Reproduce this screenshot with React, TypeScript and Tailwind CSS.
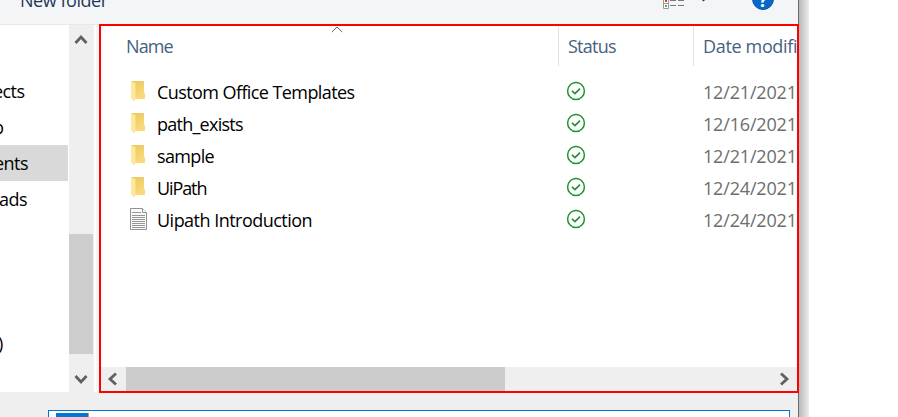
import React from "react";

const files = [
  { name: "Custom Office Templates", date: "12/21/2021", folder: true, spacing: "tracking-[-0.58px]" },
  { name: "path_exists", date: "12/16/2021", folder: true, spacing: "tracking-[-0.75px]" },
  { name: "sample", date: "12/21/2021", folder: true, spacing: "tracking-[-0.65px]" },
  { name: "UiPath", date: "12/24/2021", folder: true, spacing: "tracking-[-1.1px]" },
  { name: "Uipath Introduction", date: "12/24/2021", folder: false, spacing: "tracking-[-0.52px]" },
];

function FolderIcon() {
  return (
    <svg width="20" height="24" viewBox="0 0 20 24" className="shrink-0">
      <defs>
        <linearGradient id="back" x1="0" x2="0.6" y1="0" y2="1">
          <stop offset="0" stopColor="#e9c75f" />
          <stop offset="1" stopColor="#fadb7c" />
        </linearGradient>
        <linearGradient id="flap" x1="0" x2="1" y1="0" y2="0">
          <stop offset="0" stopColor="#ffe9a2" />
          <stop offset="1" stopColor="#fde59b" />
        </linearGradient>
      </defs>
      <path d="M2 2h13v11.5l1 .8V20H5z" fill="url(#back)" />
      <path d="M2 2l4.5 2.2V20l-.8 2.6L2 20z" fill="url(#flap)" />
    </svg>
  );
}

function DocumentIcon() {
  return (
    <svg width="20" height="24" viewBox="0 0 20 24" className="shrink-0">
      <path d="M1.5 1.5h12l4 4v17h-16z" fill="#fafafa" stroke="#929292" />
      <path d="M13.5 1.5v4h4" fill="#fff" stroke="#929292" />
      <path d="M3 5.5h9M3 8.5h13M3 10.5h13M3 12.5h13M3 14.5h13M3 16.5h13M3 18.5h13M3 20.5h13" stroke="#969696" />
    </svg>
  );
}

function SyncedIcon() {
  return (
    <svg width="20" height="20" viewBox="0 0 20 20" fill="none" stroke="#1d9134">
      <circle cx="10" cy="10" r="8.4" strokeWidth="1.5" />
      <path d="M6 9.8l3 2.8 5-5" strokeWidth="1.7" />
    </svg>
  );
}

function Arrow({ d, w, h }: { d: string; w: number; h: number }) {
  return (
    <svg width={w} height={h} viewBox={`0 0 ${w} ${h}`} fill="none" stroke="#606060" strokeWidth="2.8">
      <path d={d} />
    </svg>
  );
}

export default function App() {
  return (
    <div className="flex h-[417px] w-[898px] overflow-hidden bg-white font-['Open_Sans','Noto_Sans',sans-serif] text-[18px]">
      <div className="relative flex w-[799px] shrink-0 flex-col border-r border-[#6b6b6b] bg-[#efefef]">
        <header className="flex h-[25px] shrink-0 items-start overflow-hidden border-b border-[#e6e8ec] bg-[#f4f5f7]">
          <span className="-mt-[12px] ml-5 w-[642px] whitespace-nowrap leading-6 tracking-[-0.45px] text-[#1e395b]">New folder</span>
          <svg width="50" height="12" viewBox="0 0 50 12" className="ml-[1px] shrink-0">
            <path d="M.5-1v9.5h5V-1M.5 3.5h5" fill="#fff" stroke="#999" />
            <path d="M2 0h2v2H2z" fill="#d43a1c" />
            <path d="M2 5h2v2H2z" fill="#65a85b" />
            <path d="M7 .5h6M15 .5h6M7 5.5h6M15 5.5h6" stroke="#77777d" />
            <path d="M39 0h3l-1.5 1.5z" fill="#1e395b" />
          </svg>
          <span className="-mt-3 ml-[39px] flex h-[22px] w-[22px] shrink-0 items-center justify-center rounded-full border border-[#0755a4] bg-[#0568c9] pt-[3px] text-[18px] font-bold text-white">?</span>
        </header>

        <main className="flex h-[367px] shrink-0 bg-white">
          <nav className="flex w-[69px] shrink-0 flex-col overflow-hidden pt-12 tracking-[-0.55px]">
            <div className="flex h-9 items-center"><span className="-ml-[11px]">jects</span></div>
            <div className="flex h-9 items-center"><span className="-ml-[7px]">p</span></div>
            <div className="mr-[1px] flex h-9 items-center bg-[#d9d9d9]"><span className="-ml-[6px]">ents</span></div>
            <div className="flex h-9 items-center"><span className="-ml-[1px]">ads</span></div>
            <div className="mt-[108px] flex h-9 items-center"><span className="-ml-[2px]">)</span></div>
          </nav>
          <div className="flex w-[25px] shrink-0 flex-col items-center bg-[#efefef]">
            <div className="mr-[1px] flex h-[209px] pt-[9px]"><Arrow w={14} h={12} d="M1.5 9l5.5-6 5.5 6" /></div>
            <div className="mr-[1px] h-[120px] w-6 bg-[#cdcdcd]" />
            <div className="mr-[1px] pt-[19px]"><Arrow w={14} h={12} d="M1.5 3l5.5 6 5.5-6" /></div>
          </div>
          <div className="w-[2px] shrink-0 bg-white" />
          <div className="w-[3px] shrink-0 bg-[#f6f6f6]" />
          <section className="relative z-10 -mt-[1px] flex h-[369px] w-[700px] shrink-0 flex-col border-2 border-[#ff0000] bg-white">
            <div className="flex h-10 shrink-0 text-[#46617f]">
              <div className="relative flex w-[458px] items-center border-r border-[#e2e2e2] pl-[25px]">
                <span className="pt-[1px] tracking-[-0.9px]">Name</span>
                <svg width="12" height="7" viewBox="0 0 12 7" className="absolute left-[230px] top-0" fill="none" stroke="#666">
                  <path d="M.8 6L6 1l5.2 5" />
                </svg>
              </div>
              <div className="flex w-[135px] items-center border-r border-[#e2e2e2] pl-[9px] pt-[1px] tracking-[-0.75px]">Status</div>
              <div className="flex w-[103px] items-center overflow-hidden whitespace-nowrap pl-[9px] pt-[1px] tracking-[-0.34px]">Date modified</div>
            </div>
            <div className="h-[301px] pt-[10px]">
              {files.map((f) => (
                <div key={f.name} className="flex h-8 items-center">
                  <div className="flex w-[457px] items-center pl-7">
                    <div className="-mt-[3px] h-6">{f.folder ? <FolderIcon /> : <DocumentIcon />}</div>
                    <span className={`pl-2 text-black ${f.spacing}`}>{f.name}</span>
                  </div>
                  <div className="-mt-[3px] w-[145px] pl-2"><SyncedIcon /></div>
                  <span className="tracking-[-0.17px] text-[#6d6d6d]">{f.date}</span>
                </div>
              ))}
            </div>
            <div className="flex h-6 items-center bg-[#efefef]">
              <div className="flex w-[25px] justify-center pr-[2px]"><Arrow w={12} h={14} d="M9 1.5L3 7l6 5.5" /></div>
              <div className="h-6 w-[379px] bg-[#cccccc]" />
              <div className="ml-auto pr-[7px]"><Arrow w={12} h={14} d="M3 1.5L9 7l-6 5.5" /></div>
            </div>
          </section>
        </main>

        <footer className="h-[25px] pl-12 pt-[18px]">
          <div className="flex h-[30px] w-[742px] border border-[#0078d7] bg-white pl-[7px] pt-[2px]">
            <div className="h-6 w-[33px] border-r border-[#f48731] bg-[#0078d7]" />
          </div>
        </footer>
      </div>
      <div className="w-[10px] shrink-0 bg-linear-to-r from-[#b9b9b9] to-[#ececec]" />
    </div>
  );
}
